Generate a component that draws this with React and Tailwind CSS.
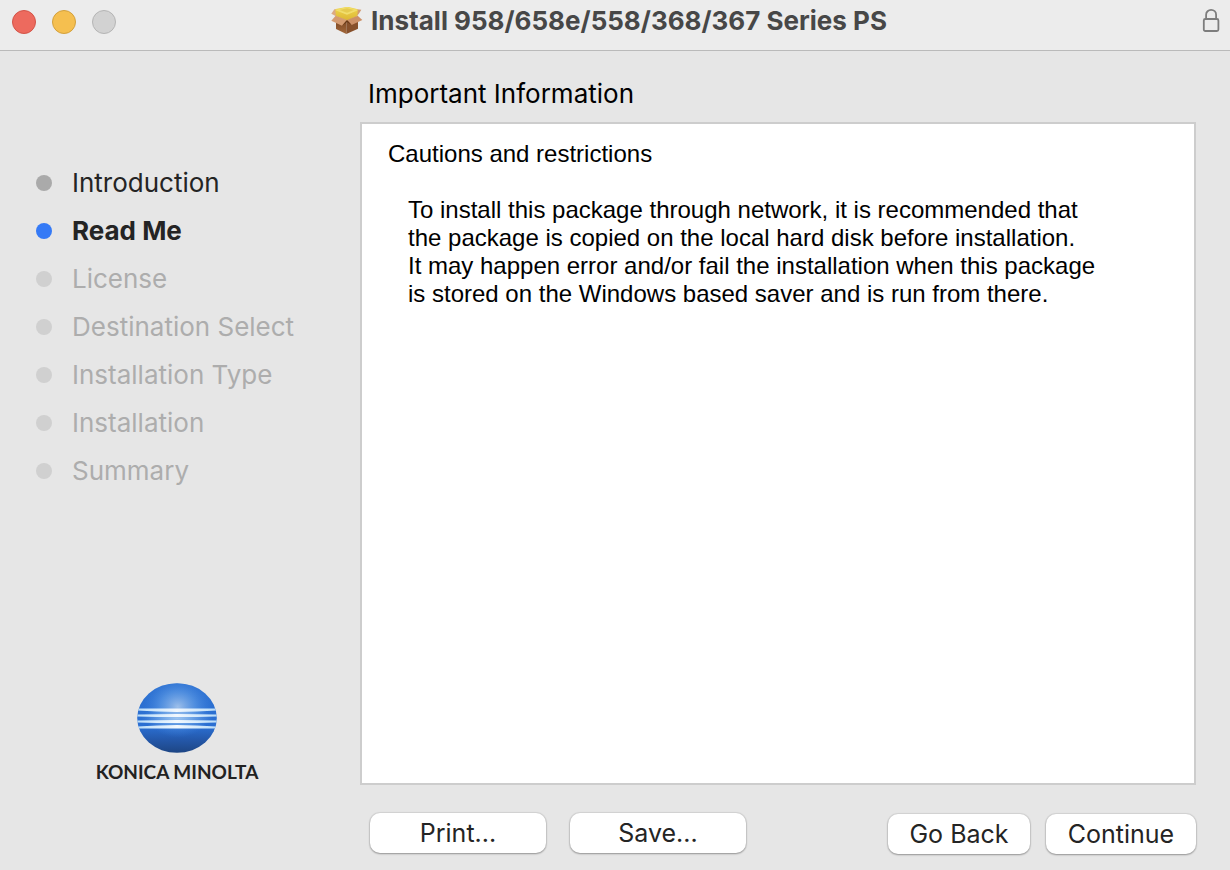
import React from "react";

const steps = [
  { label: "Introduction", state: "done" },
  { label: "Read Me", state: "current" },
  { label: "License", state: "pending" },
  { label: "Destination Select", state: "pending" },
  { label: "Installation Type", state: "pending" },
  { label: "Installation", state: "pending" },
  { label: "Summary", state: "pending" },
];

const stepStyles = {
  done: { dot: "bg-[#aaaaaa]", text: "text-[#242424]" },
  current: { dot: "bg-[#357af6]", text: "font-bold text-[#242424]" },
  pending: { dot: "bg-[#d0d0d0]", text: "text-[#adadad]" },
};

function PackageIcon() {
  return (
    <svg className="h-7 w-8 shrink-0" viewBox="12 12 96 84" aria-hidden="true">
      <defs>
        <linearGradient id="pkg-left" x1="0" y1="0" x2="0" y2="1">
          <stop offset="0" stopColor="#7c4722" />
          <stop offset="1" stopColor="#a3683b" />
        </linearGradient>
        <linearGradient id="pkg-front" x1="0" y1="0" x2="0" y2="1">
          <stop offset="0" stopColor="#f0d84c" />
          <stop offset="1" stopColor="#dcb535" />
        </linearGradient>
      </defs>
      <path d="M28 19 L22 19 L13 32 L27 40 Z" fill="#dca983" />
      <path d="M90 19 L103 20 L97 30 L90 39 Z" fill="#d19a70" />
      <path d="M27 54 V78 L58 93 V52 Z" fill="url(#pkg-left)" />
      <path d="M58 52 V93 L93 77 V54 Z" fill="#87502b" />
      <path d="M26 18 L58 12 Q61 11 65 12 L90 18 Q93 20 92 24 L91 40 L60 53 L27 40 L25 24 Z" fill="url(#pkg-front)" />
      <path d="M27 20 L60 12 L91 20 L60 34 Z" fill="#f0dd68" />
      <path d="M38 21 L60 16 L80 21 L60 29 Z" fill="#e6cb50" />
      <path d="M27 21 L60 34 L91 21" fill="none" stroke="#f8eb91" strokeWidth="1.5" />
      <path d="M26 38 L13 53 L45 68 L60 51 Z" fill="#d49b71" />
      <path d="M92 38 L60 51 L74 66 L106 51 Z" fill="#cc9067" />
      <path d="M45 68 L60 51 L74 66 L60 57 Z" fill="#673817" />
    </svg>
  );
}

function LockIcon() {
  return (
    <svg className="h-6 w-5" viewBox="0 0 20 24" fill="none" stroke="#7d7d7d" strokeWidth="1.8" aria-hidden="true">
      <rect x="1.8" y="11" width="14.6" height="12" rx="1.5" />
      <path d="M4.1 11 V6.7 C4.1 3.8 6.4 1.9 9.1 1.9 S14.1 3.8 14.1 6.7 V11" />
    </svg>
  );
}

function Globe() {
  return (
    <svg className="h-[70px] w-20" viewBox="0 0 80 70" aria-hidden="true">
      <defs>
        <linearGradient id="globe-base" x1="0" y1="0" x2="0" y2="1">
          <stop offset="0" stopColor="#2c70d0" />
          <stop offset="0.62" stopColor="#2b6fd2" />
          <stop offset="0.8" stopColor="#2459ac" />
          <stop offset="1" stopColor="#1d4583" />
        </linearGradient>
        <radialGradient id="globe-glow" cx="0.51" cy="0.34" r="0.44">
          <stop offset="0" stopColor="#9dbfea" />
          <stop offset="0.5" stopColor="#5a97e3" stopOpacity="0.75" />
          <stop offset="1" stopColor="#3a7fdd" stopOpacity="0" />
        </radialGradient>
        <radialGradient id="globe-center">
          <stop offset="0" stopColor="#b4d5f6" stopOpacity="0.7" />
          <stop offset="1" stopColor="#8dbdf0" stopOpacity="0" />
        </radialGradient>
        <linearGradient id="globe-band" x1="0" y1="0" x2="1" y2="0">
          <stop offset="0" stopColor="#b9dcf8" />
          <stop offset="0.5" stopColor="#f2f8fe" />
          <stop offset="1" stopColor="#b9dcf8" />
        </linearGradient>
        <clipPath id="globe-clip">
          <ellipse cx="40" cy="35" rx="39.8" ry="34.8" />
        </clipPath>
      </defs>
      <g clipPath="url(#globe-clip)">
        <rect width="80" height="70" fill="url(#globe-base)" />
        <rect width="80" height="70" fill="url(#globe-glow)" />
        <ellipse cx="40" cy="35.5" rx="36" ry="10" fill="url(#globe-center)" />
        <g fill="url(#globe-band)">
          <path d="M0 25.4 H80 V27.6 Q40 30.4 0 27.6 Z" />
          <path d="M0 31.4 Q40 30.4 80 31.4 V33.4 Q40 34.6 0 33.4 Z" />
          <path d="M0 37.4 Q40 36.4 80 37.4 V39.4 Q40 40.4 0 39.4 Z" />
          <path d="M0 43.4 Q40 40.4 80 43.4 V45.6 H0 Z" />
        </g>
      </g>
    </svg>
  );
}

function PushButton({ className, children }) {
  return (
    <button
      type="button"
      className={`h-10 rounded-[10px] bg-white text-[25px] leading-8 text-[#242424] shadow-[0_0_1px_1px_rgba(0,0,0,0.08),0_1px_2px_rgba(0,0,0,0.3)] ${className}`}
    >
      {children}
    </button>
  );
}

export default function App() {
  return (
    <div className="flex min-h-screen flex-col bg-[#e6e6e6] font-[Inter,sans-serif] text-[26px] leading-8">
      <header className="flex h-[51px] items-start border-b border-[#bababa] bg-[#ececec] pt-[5px]">
        <div className="flex flex-1 gap-4 pt-[5px] pl-3">
          <button type="button" aria-label="Close" className="size-6 rounded-full border border-[#d35448] bg-[#ed6a5e]" />
          <button type="button" aria-label="Minimize" className="size-6 rounded-full border border-[#d3a03c] bg-[#f5bf4f]" />
          <button type="button" aria-label="Zoom" disabled className="size-6 rounded-full border border-[#b5b5b5] bg-[#d2d2d2]" />
        </div>
        <div className="flex items-center gap-2 pr-4">
          <PackageIcon />
          <h1 className="font-bold whitespace-nowrap text-[#474747]">Install 958/658e/558/368/367 Series PS</h1>
        </div>
        <div className="flex flex-1 justify-end pt-[3px] pr-2">
          <LockIcon />
        </div>
      </header>

      <div className="flex flex-1">
        <aside className="flex w-[360px] shrink-0 flex-col justify-between pt-[108px] pb-[88px]">
          <ol className="pl-9">
            {steps.map(({ label, state }) => (
              <li key={label} aria-current={state === "current" ? "step" : undefined} className="flex h-12 items-center gap-5">
                <span className={`size-4 rounded-full ${stepStyles[state].dot}`} />
                <span className={stepStyles[state].text}>{label}</span>
              </li>
            ))}
          </ol>
          <div className="flex w-[354px] flex-col items-center gap-[9px]">
            <Globe />
            <span className="font-[Lato,sans-serif] text-[19px] leading-5 font-bold text-[#222222]">KONICA MINOLTA</span>
          </div>
        </aside>

        <main className="flex flex-1 flex-col pt-[27px] pr-[34px] pb-4">
          <h2 className="pl-2 text-black">Important Information</h2>
          <section className="mt-3 flex-1 border-2 border-[#cdcdcd] bg-white px-[26px] pt-4 font-['Liberation_Sans',Arial,sans-serif] text-2xl leading-7 text-black">
            <p>Cautions and restrictions</p>
            <p className="mt-7 pl-5">
              To install this package through network, it is recommended that
              <br />
              the package is copied on the local hard disk before installation.
              <br />
              It may happen error and/or fail the installation when this package
              <br />
              is stored on the Windows based saver and is run from there.
            </p>
          </section>
          <footer className="mt-7 flex justify-between pl-2.5">
            <div className="flex gap-6 pb-px">
              <PushButton className="w-44">Print...</PushButton>
              <PushButton className="w-44">Save...</PushButton>
            </div>
            <div className="flex items-end gap-4">
              <PushButton className="w-[142px]">Go Back</PushButton>
              <PushButton className="w-[150px]">Continue</PushButton>
            </div>
          </footer>
        </main>
      </div>
    </div>
  );
}
